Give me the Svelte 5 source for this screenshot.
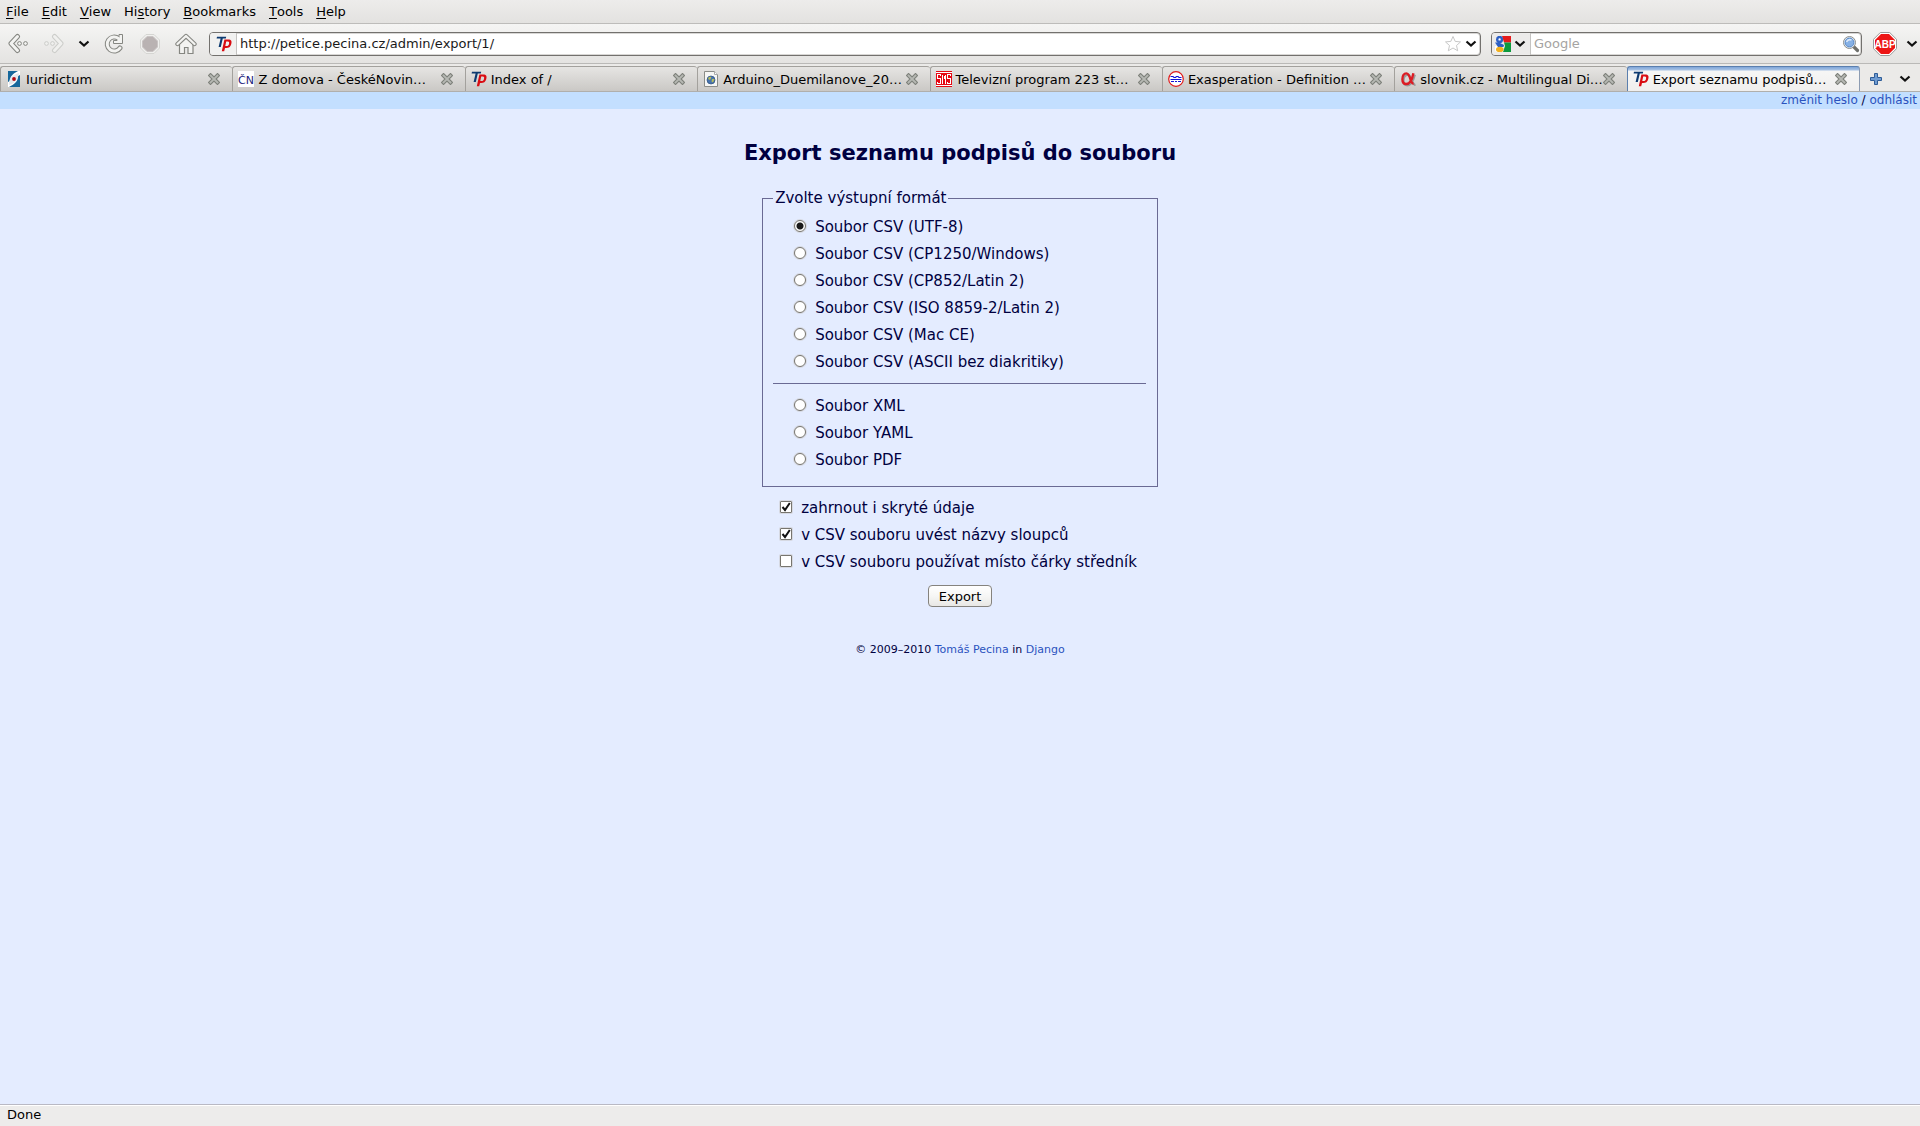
<script lang="ts">
  const menus = [
    ['', 'F', 'ile'],
    ['', 'E', 'dit'],
    ['', 'V', 'iew'],
    ['Hi', 's', 'tory'],
    ['', 'B', 'ookmarks'],
    ['', 'T', 'ools'],
    ['', 'H', 'elp']
  ];

  const tabs = [
    { icon: 'iuridictum', title: 'Iuridictum' },
    { icon: 'cn', title: 'Z domova - ČeskéNovin…' },
    { icon: 'tp', title: 'Index of /' },
    { icon: 'page', title: 'Arduino_Duemilanove_20…' },
    { icon: 'sms', title: 'Televizní program 223 st…' },
    { icon: 'wave', title: 'Exasperation - Definition …' },
    { icon: 'alpha', title: 'slovnik.cz - Multilingual Di…' },
    { icon: 'tp', title: 'Export seznamu podpisů…' }
  ];

  const csvFormats = [
    { id: 'utf8', label: 'Soubor CSV (UTF-8)' },
    { id: 'cp1250', label: 'Soubor CSV (CP1250/Windows)' },
    { id: 'cp852', label: 'Soubor CSV (CP852/Latin 2)' },
    { id: 'iso', label: 'Soubor CSV (ISO 8859-2/Latin 2)' },
    { id: 'mac', label: 'Soubor CSV (Mac CE)' },
    { id: 'ascii', label: 'Soubor CSV (ASCII bez diakritiky)' }
  ];

  const otherFormats = [
    { id: 'xml', label: 'Soubor XML' },
    { id: 'yaml', label: 'Soubor YAML' },
    { id: 'pdf', label: 'Soubor PDF' }
  ];

  let activeTab = $state(7);
  let format = $state('utf8');
  let url = $state('http://petice.pecina.cz/admin/export/1/');
  let query = $state('');
  let options = $state([
    { label: 'zahrnout i skryté údaje', checked: true },
    { label: 'v CSV souboru uvést názvy sloupců', checked: true },
    { label: 'v CSV souboru používat místo čárky středník', checked: false }
  ]);
</script>

{#snippet chevron()}
  <svg class="chevron" viewBox="0 0 12 8" width="12" height="8">
    <path d="M1.5 1.5 L6 5.5 L10.5 1.5" fill="none" stroke="#111" stroke-width="2.2" />
  </svg>
{/snippet}

{#snippet favicon(name: string)}
  <svg class="favicon" viewBox="0 0 16 16" width="16" height="16">
    {#if name === 'iuridictum'}
      <rect x="2" y="0" width="12" height="16" fill="#fff" />
      <path d="M2 0 H12 C6 3 4 6 4 10 L2 11 Z" fill="#16679b" />
      <path d="M14 16 H3 C9 13 12 10 12 5 L14 4 Z" fill="#16679b" />
      <path d="M3 11 C4 6 7 4 13 2 C12 8 9 12 3 14 Z" fill="#e4e8ec" />
      <circle cx="8" cy="8" r="1.9" fill="#b00a12" />
    {:else if name === 'cn'}
      <rect width="16" height="16" fill="#fff" />
      <text x="0" y="13" font-size="11" fill="#20207c">ČN</text>
    {:else if name === 'tp'}
      <path d="M1 .8 H10.2 L9.8 2.6 H6.8 L4.8 11 H2.6 L4.6 2.6 H.6 Z" fill="#0d3a70" />
      <path d="M8.4 3.6 H12 C15.6 3.6 16 5.6 15.2 8.2 C14.4 11 12.8 12 10.2 12 H9 L8.2 15.2 H5.8 Z M10.2 5.5 L9.3 10.1 H10.4 C12 10.1 12.6 9.4 13 8 C13.4 6.2 13.1 5.5 11.7 5.5 Z" fill="#d90c12" fill-rule="evenodd" />
    {:else if name === 'page'}
      <path d="M1.5 .5 H11.5 L14.5 3.5 V15.5 H1.5 Z" fill="#f6f6f4" stroke="#8b8c88" />
      <path d="M11.5 .5 V3.5 H14.5" fill="#fff" stroke="#aaa" />
      <circle cx="8" cy="9" r="4" fill="#4873ad" stroke="#2c507f" stroke-width=".7" />
      <path d="M5 7 Q7 5 8.4 6 L7.6 8.2 L6 9 Z M9 8 L11.5 8 L10 11.5 L8.5 10.5 Z" fill="#b6bd5a" />
    {:else if name === 'sms'}
      <rect width="16" height="16" fill="#e50914" />
      <path d="M0 1.5 H16 M0 14.5 H16" stroke="#fff" />
      <path d="M4.5 5 V3.5 H1.5 V7.5 H4.5 V12.5 H1.5 V11 M6.5 13 V3.5 M9.5 3.5 V13 M8 5 V8 M14.5 5 V3.5 H11.5 V7.5 H14.5 V12.5 H11.5 V11" fill="none" stroke="#fff" shape-rendering="crispEdges" />
    {:else if name === 'wave'}
      <circle cx="8" cy="8" r="7.3" fill="#fff" stroke="#e01818" stroke-width="1.2" />
      <path d="M2.5 5.5 H5 L6 6.5 H7.5 L8.5 5.5 H10 L11 6.5 H13.5 M2.5 8.5 H13.5 M3 10.5 H6 M7 10.5 H9 M10 10.5 H13" fill="none" stroke="#1414d8" stroke-width="1.2" />
    {:else if name === 'alpha'}
      <path d="M14.2 3 C12.6 9 10.5 13.6 6.6 13.6 C3.8 13.6 2.8 11.4 2.8 8.8 C2.8 5.6 4.4 3 7.2 3 C11 3 11 13.4 14.8 13.2" transform="translate(.7 .8)" fill="none" stroke="#999" stroke-width="2.2" />
      <path d="M13.4 2.2 C12.2 8.6 10.1 13 6.2 13 C3.4 13 2.4 10.8 2.4 8.2 C2.4 4.8 4 2.4 6.4 2.4 C10.6 2.4 10 12.8 13.6 12.6" fill="none" stroke="#dc1c24" stroke-width="2.4" />
    {/if}
  </svg>
{/snippet}

{#snippet closeIcon()}
  <svg viewBox="0 0 12 12" width="12" height="12">
    <path d="M2.5 2.5 L9.5 9.5 M9.5 2.5 L2.5 9.5" stroke="#7d807a" stroke-width="4" stroke-linecap="square" />
    <path d="M2.5 2.5 L9.5 9.5 M9.5 2.5 L2.5 9.5" stroke="#b6b8b3" stroke-width="1.8" stroke-linecap="square" />
  </svg>
{/snippet}

<div class="window">
  <nav class="menubar">
    {#each menus as [before, key, after]}
      <button type="button">{before}<u>{key}</u>{after}</button>
    {/each}
  </nav>

  <div class="toolbar">
    <div class="nav-buttons">
      <button type="button" aria-label="Back">
        <svg viewBox="0 0 22 22" width="22" height="22">
          <path d="M10.5 3.5 L4 10.5 L10.5 17.5" fill="none" stroke="#858681" stroke-width="5" stroke-linecap="round" stroke-linejoin="round" />
          <path d="M10.5 3.5 L4 10.5 L10.5 17.5" fill="none" stroke="#f3f3f1" stroke-width="3" stroke-linecap="round" stroke-linejoin="round" />
          <circle cx="12.5" cy="10.5" r="1.9" fill="#f3f3f1" stroke="#858681" />
          <circle cx="18.5" cy="10.5" r="1.9" fill="#f3f3f1" stroke="#858681" />
        </svg>
      </button>
      <button type="button" aria-label="Forward" disabled>
        <svg viewBox="0 0 22 22" width="22" height="22">
          <path d="M11.5 3.5 L18 10.5 L11.5 17.5" fill="none" stroke="#cccdca" stroke-width="5" stroke-linecap="round" stroke-linejoin="round" />
          <path d="M11.5 3.5 L18 10.5 L11.5 17.5" fill="none" stroke="#f0f0ee" stroke-width="3" stroke-linecap="round" stroke-linejoin="round" />
          <circle cx="3.5" cy="10.5" r="1.9" fill="#f0f0ee" stroke="#cccdca" />
          <circle cx="9.5" cy="10.5" r="1.9" fill="#f0f0ee" stroke="#cccdca" />
        </svg>
      </button>
      <button type="button" class="history-btn" aria-label="History">{@render chevron()}</button>
      <button type="button" aria-label="Reload">
        <svg viewBox="0 0 22 22" width="22" height="22">
          <path d="M15.5 5.5 A7 7 0 1 0 17 15" fill="none" stroke="#858681" stroke-width="5" stroke-linecap="round" />
          <path d="M19.5 1.5 V10.5 H10.5 V7.5 H14 L16 5.5 V1.5 Z" fill="#f3f3f1" stroke="#858681" stroke-linejoin="round" />
          <path d="M15.5 5.5 A7 7 0 1 0 17 15" fill="none" stroke="#f3f3f1" stroke-width="3" stroke-linecap="round" />
        </svg>
      </button>
      <button type="button" aria-label="Stop" disabled>
        <svg viewBox="0 0 22 22" width="22" height="22">
          <path d="M7 1.5 H15 L20.5 7 V15 L15 20.5 H7 L1.5 15 V7 Z" fill="#f0f0ee" stroke="#d5d5d2" />
          <path d="M8 3.5 H14 L18.5 8 V14 L14 18.5 H8 L3.5 14 V8 Z" fill="#b9b2b2" stroke="#c9c4c4" />
        </svg>
      </button>
      <button type="button" aria-label="Home">
        <svg viewBox="0 0 22 22" width="22" height="22">
          <path d="M4.5 11 V20.5 H9.5 V14.5 H13 V20.5 H18 V11 L11 5 Z" fill="#f3f3f1" stroke="#858681" stroke-width="1.2" />
          <path d="M2.5 11 L11 3 L19.5 11" fill="none" stroke="#858681" stroke-width="4.4" stroke-linecap="round" stroke-linejoin="round" />
          <path d="M2.5 11 L11 3 L19.5 11" fill="none" stroke="#f3f3f1" stroke-width="2.4" stroke-linecap="round" stroke-linejoin="round" />
        </svg>
      </button>
    </div>

    <div class="field location">
      <span class="site-icon">{@render favicon('tp')}</span>
      <input type="text" aria-label="Location" bind:value={url} />
      <button type="button" aria-label="Bookmark this page">
        <svg viewBox="0 0 18 18" width="18" height="18">
          <path d="M9 1.5 L11.2 6.4 L16.5 6.9 L12.5 10.5 L13.7 15.8 L9 13 L4.3 15.8 L5.5 10.5 L1.5 6.9 L6.8 6.4 Z" fill="#fff" stroke="#c8c8c8" stroke-linejoin="round" />
        </svg>
      </button>
      <button type="button" class="drop" aria-label="Show history">{@render chevron()}</button>
    </div>

    <div class="field search">
      <button type="button" class="engine" aria-label="Search engine">
        <svg viewBox="0 0 16 16" width="16" height="16">
          <path d="M7 0 H16 V6.5 H9 Z" fill="#e51b1b" />
          <path d="M9 6.5 H16 V16 H8 L10 10 Z" fill="#0d9a3e" />
          <path d="M0 10 H8.5 L8 16 H2 Q0 16 0 14 Z" fill="#fff" />
          <circle cx="4.6" cy="3.4" r="2.4" fill="#fff" stroke="#2c5fc4" stroke-width="2.4" />
          <path d="M0 6.5 H4 L9 9 L8.5 11 H3 Z" fill="#2c5fc4" />
          <ellipse cx="4.8" cy="13.4" rx="3.8" ry="2.6" fill="#f2b01e" />
        </svg>
        {@render chevron()}
      </button>
      <input type="text" aria-label="Search" placeholder="Google" bind:value={query} />
      <button type="button" aria-label="Search">
        <svg viewBox="0 0 18 18" width="18" height="18">
          <path d="M11.5 11.5 L15.5 15.5" stroke="#6e6f6b" stroke-width="3.2" stroke-linecap="round" />
          <circle cx="7.5" cy="7.5" r="6" fill="#dfe9f5" stroke="#8d8f8c" />
          <circle cx="7.5" cy="7.5" r="4.4" fill="#86b1e6" stroke="#5a8ac8" />
          <path d="M4.5 7 Q6 3.8 9.5 5" fill="none" stroke="#d9e8fa" stroke-width="1.6" />
        </svg>
      </button>
    </div>

    <button type="button" class="abp" aria-label="Adblock Plus">
      <svg viewBox="0 0 24 24" width="24" height="24">
        <path d="M7.3 .5 H16.7 L23.5 7.3 V16.7 L16.7 23.5 H7.3 L.5 16.7 V7.3 Z" fill="#fff" stroke="#9a9a9a" />
        <path d="M8 2 H16 L22 8 V16 L16 22 H8 L2 16 V8 Z" fill="#ed1515" />
        <text x="12" y="16" text-anchor="middle" class="abp-text">ABP</text>
      </svg>
    </button>
    <button type="button" aria-label="Adblock Plus options">{@render chevron()}</button>
  </div>

  <div class="tabbar">
    {#each tabs as tab, i}
      <div class="tab" class:active={activeTab === i}>
        <button type="button" class="tab-title" onclick={() => (activeTab = i)}>
          {@render favicon(tab.icon)}
          <span>{tab.title}</span>
        </button>
        <button type="button" class="tab-close" aria-label="Close tab">{@render closeIcon()}</button>
      </div>
    {/each}
    <div class="tab-tools">
      <button type="button" aria-label="New tab">
        <svg viewBox="0 0 12 12" width="12" height="12">
          <path d="M4.5 .5 H7.5 V4.5 H11.5 V7.5 H7.5 V11.5 H4.5 V7.5 H.5 V4.5 H4.5 Z" fill="#6f9bd1" stroke="#2f5c96" />
        </svg>
      </button>
      <button type="button" aria-label="List all tabs">{@render chevron()}</button>
    </div>
  </div>

  <div class="page">
    <div class="userbar">
      <a href="#heslo">změnit heslo</a> / <a href="#odhlasit">odhlásit</a>
    </div>

    <main>
      <h1>Export seznamu podpisů do souboru</h1>

      <form onsubmit={(e) => e.preventDefault()}>
        <fieldset>
          <legend>Zvolte výstupní formát</legend>
          {#each csvFormats as f}
            <label class="row">
              <input type="radio" name="format" value={f.id} bind:group={format} />
              {f.label}
            </label>
          {/each}
          <hr />
          {#each otherFormats as f}
            <label class="row">
              <input type="radio" name="format" value={f.id} bind:group={format} />
              {f.label}
            </label>
          {/each}
        </fieldset>

        <div class="options">
          {#each options as option}
            <label class="row">
              <input type="checkbox" bind:checked={option.checked} />
              {option.label}
            </label>
          {/each}
        </div>

        <button type="submit" class="submit">Export</button>
      </form>

      <footer>
        © 2009–2010 <a href="#pecina">Tomáš Pecina</a> in <a href="#django">Django</a>
      </footer>
    </main>
  </div>

  <div class="statusbar">Done</div>
</div>

<style>
  :global(body) {
    margin: 0;
  }

  .window {
    display: flex;
    flex-direction: column;
    min-height: 100vh;
    font-family: 'DejaVu Sans', sans-serif;
    font-size: 13px;
    color: #000;
    background: #edeceb;
  }

  button {
    display: flex;
    align-items: center;
    padding: 0;
    border: none;
    background: none;
    font: inherit;
    color: inherit;
  }

  svg {
    display: block;
    flex: none;
  }

  /* Menu */
  .menubar {
    display: flex;
    gap: 13px;
    height: 23px;
    padding: 0 6px;
    border-bottom: 1px solid #bdbcba;
    background: linear-gradient(#edeceb, #e3e2e0);
  }

  u {
    text-underline-offset: 2px;
  }

  /* Navigation toolbar */
  .toolbar {
    display: flex;
    align-items: center;
    height: 39px;
    padding: 0 2px 0 7px;
    border-bottom: 1px solid #bab9b7;
    background: linear-gradient(#f5f5f4, #e4e3e1);
  }

  .nav-buttons {
    display: flex;
    gap: 14px;
    margin-right: 12px;
  }

  .history-btn {
    width: 10px;
    justify-content: center;
  }

  .field {
    display: flex;
    align-items: center;
    box-sizing: border-box;
    height: 24px;
    border: 1px solid #73716e;
    border-radius: 4px;
    background: #fff;
    box-shadow: inset 0 0 0 1px #d8d7d5;
    overflow: hidden;
  }

  .field input {
    flex: 1;
    min-width: 0;
    padding: 0 3px;
    border: none;
    outline: none;
    background: none;
    font: inherit;
    color: #1a1a1a;
  }

  .field input::placeholder {
    color: #a5a4a2;
    opacity: 1;
  }

  .location {
    flex: 1;
    margin-right: 10px;
  }

  .site-icon {
    display: flex;
    align-items: center;
    height: 100%;
    padding: 0 4px 0 6px;
    border-right: 1px solid #c4c3c1;
    background: #f1f1f0;
  }

  .drop {
    margin: 0 3px;
  }

  .search {
    width: 371px;
    margin-right: 11px;
  }

  .search > button:last-child {
    margin-right: 1px;
  }

  .engine {
    gap: 3px;
    height: 100%;
    padding: 0 4px 0 3px;
    border-right: 1px solid #c4c3c1;
    background: #ecebea;
  }

  .abp {
    margin-right: 9px;
  }

  .abp-text {
    font-family: 'Liberation Sans', sans-serif;
    font-size: 10px;
    font-weight: bold;
    fill: #fff;
  }

  /* Tabs */
  .tabbar {
    display: flex;
    height: 25px;
    padding-top: 2px;
    border-bottom: 1px solid #b0afac;
    background: #ebeae8;
  }

  .tab {
    display: flex;
    flex: 1;
    align-items: center;
    box-sizing: border-box;
    min-width: 0;
    padding: 0 12px 0 5px;
    border: 1px solid #a3a19d;
    border-right: none;
    border-bottom: none;
    border-radius: 3px 3px 0 0;
    background: linear-gradient(#e6e5e3, #cac8c5);
  }

  .tab-title {
    flex: 1;
    gap: 4px;
    min-width: 0;
    white-space: nowrap;
  }

  .tab.active {
    border-color: #5b7fae;
    border-right: 1px solid #8d9cb2;
    background: linear-gradient(#7ea5d8 0, #a8c2e4 3px, #f6f6f5 4px, #f0efee);
  }

  .tab-tools {
    display: flex;
    align-items: center;
    gap: 17px;
    padding: 0 9px 0 10px;
  }

  /* Page content */
  .page {
    flex: 1;
    background: #e4ecff;
    color: #000040;
  }

  a {
    color: #2a52be;
    text-decoration: none;
  }

  .userbar {
    padding-right: 3px;
    background: #c3dfff;
    font-size: 12px;
    line-height: 17px;
    text-align: right;
  }

  main {
    display: flex;
    flex-direction: column;
    align-items: center;
  }

  h1 {
    margin: 31px 0 23px;
    font-size: 21px;
    line-height: 26px;
  }

  form {
    display: flex;
    flex-direction: column;
    font-size: 15px;
    line-height: 19px;
  }

  fieldset {
    min-width: 0;
    margin: 0;
    padding: 6px 11px 12px 10px;
    border: 1px solid #6a6a94;
  }

  legend {
    padding: 0 2px;
  }

  .row {
    display: flex;
    align-items: center;
    height: 27px;
  }

  fieldset .row {
    padding-left: 21px;
  }

  .row input {
    appearance: none;
    box-sizing: border-box;
    width: 12px;
    height: 12px;
    margin: 0 9px 4px 0;
    border: 1px solid #77756f;
    background: #fff center / 10px 10px no-repeat;
    box-shadow: 0 0 0 1px #d6d9e2;
  }

  .row input[type='radio'] {
    border-radius: 50%;
  }

  .row input[type='radio']:checked {
    background-image: radial-gradient(circle, #1a1a1a 3px, transparent 4px);
  }

  .row input[type='checkbox'] {
    border-radius: 1px;
  }

  .row input[type='checkbox']:checked {
    background-image: url("data:image/svg+xml,%3Csvg xmlns='http://www.w3.org/2000/svg' viewBox='0 0 10 10'%3E%3Cpath d='M1.5 5 L4 8 L8.8 1' fill='none' stroke='%23111' stroke-width='2'/%3E%3C/svg%3E");
  }

  hr {
    margin: 7px 0 9px;
    border: none;
    border-top: 1px solid #6a6a94;
  }

  .options {
    padding: 8px 21px 9px 18px;
  }

  .submit {
    align-self: center;
    height: 22px;
    padding: 0 10px;
    border: 1px solid #85837e;
    border-radius: 4px;
    background: linear-gradient(#fff, #f6f6f5 50%, #e8e7e5);
    font-size: 13px;
    color: #000;
  }

  footer {
    margin-top: 36px;
    font-size: 11px;
    line-height: 14px;
  }

  .statusbar {
    height: 21px;
    padding: 0 7px;
    border-top: 1px solid #b9b9c4;
    box-shadow: inset 0 1px #fff;
    line-height: 20px;
  }
</style>
